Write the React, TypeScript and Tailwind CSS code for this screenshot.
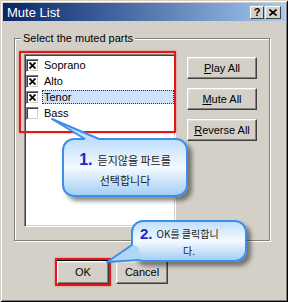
import type { ReactNode } from "react";

const Check = ({ checked }: { checked: boolean }) => (
  <span className="w-[13px] h-[13px] shrink-0 bg-white border border-t-[#808080] border-l-[#808080] border-b-white border-r-white shadow-[inset_1px_1px_0_#404040,inset_-1px_-1px_0_#d4d0c8] flex items-center justify-center">
    {checked && (
      <svg width="7" height="7" viewBox="0 0 7 7">
        <path d="M0.5 0.5 L6.5 6.5 M6.5 0.5 L0.5 6.5" stroke="#000" strokeWidth="1.8" />
      </svg>
    )}
  </span>
);

const Btn = ({ children, className = "" }: { children: ReactNode; className?: string }) => (
  <button
    className={`flex items-center justify-center bg-[#d4d0c8] border border-t-white border-l-white border-b-[#404040] border-r-[#404040] shadow-[inset_-1px_-1px_0_#808080,inset_1px_1px_0_#dfdfdf] text-[11px] leading-none text-black ${className}`}
  >
    {children}
  </button>
);

const parts = [
  { name: "Soprano", checked: true },
  { name: "Alto", checked: true },
  { name: "Tenor", checked: true, selected: true },
  { name: "Bass", checked: false },
];

export default function App() {
  return (
    <div className="w-[288px] h-[302px] relative bg-[#d4d0c8] p-[3px] flex flex-col font-['Liberation_Sans',Arial,sans-serif] text-black shadow-[inset_1px_1px_0_#d4d0c8,inset_-1px_-1px_0_#000,inset_2px_2px_0_#fff,inset_-2px_-2px_0_#808080]">
      {/* title bar */}
      <div className="h-[18px] flex items-center pl-[4px] pr-[4px] bg-linear-to-r from-[#0a246a] to-[#a6caf0]">
        <span className="text-white text-[13px] leading-none">Mute List</span>
        <div className="ml-auto flex gap-[1px]">
          <span className="w-[14px] h-[13px] flex items-center justify-center bg-[#d4d0c8] border border-t-white border-l-white border-b-[#404040] border-r-[#404040] text-[11px] font-bold leading-none">
            ?
          </span>
          <span className="w-[16px] h-[13px] flex items-center justify-center bg-[#d4d0c8] border border-t-white border-l-white border-b-[#404040] border-r-[#404040]">
            <svg width="8" height="7" viewBox="0 0 8 7">
              <path d="M0.5 0.5 L7.5 6.5 M7.5 0.5 L0.5 6.5" stroke="#000" strokeWidth="1.6" />
            </svg>
          </span>
        </div>
      </div>

      <div className="flex-1 flex flex-col pl-[11px]">
        {/* group box */}
        <div className="mt-[17px] w-[256px] h-[203px] border border-[#808080] shadow-[inset_1px_1px_0_#fff,1px_1px_0_#fff] px-[9px]">
          <div className="-mt-[7px] -ml-[3px] w-fit px-[2px] bg-[#d4d0c8] text-[11px] leading-[13px]">
            Select the muted parts
          </div>
          <div className="flex mt-[9px]">
            <div className="w-[152px] h-[173px] bg-white border border-t-[#808080] border-l-[#808080] border-b-white border-r-white shadow-[inset_1px_1px_0_#404040,inset_-1px_-1px_0_#d4d0c8] pt-[2px] pl-[1px] pr-[1px]">
              {parts.map((p) => (
                <div key={p.name} className="h-[16px] flex items-center">
                  <Check checked={p.checked} />
                  <span
                    className={`ml-[3px] flex-1 h-[14px] px-[1px] text-[11px] leading-[12px] flex items-center ${
                      p.selected ? "bg-[#cde2f8] border border-dotted border-[#333]" : "border border-transparent"
                    }`}
                  >
                    {p.name}
                  </span>
                </div>
              ))}
            </div>
            <div className="ml-[11px] mt-[3px] flex flex-col gap-[9px]">
              <Btn className="w-[70px] h-[22px]">
                <span className="underline underline-offset-[1px]">P</span>lay All
              </Btn>
              <Btn className="w-[70px] h-[22px]">
                <span className="underline underline-offset-[1px]">M</span>ute All
              </Btn>
              <Btn className="w-[70px] h-[22px]">
                <span className="underline underline-offset-[1px]">R</span>everse All
              </Btn>
            </div>
          </div>
        </div>

        {/* OK / Cancel */}
        <div className="flex gap-[7px] mt-[20px] ml-[43px]">
          <Btn className="w-[52px] h-[23px] outline outline-1 outline-black">OK</Btn>
          <Btn className="w-[52px] h-[23px]">Cancel</Btn>
        </div>
      </div>

      {/* red highlight boxes */}
      <div className="absolute left-[19px] top-[51px] w-[157px] h-[82px] border-2 border-[#e01818] shadow-[0_0_2px_rgba(255,60,60,0.6)]" />
      <div className="absolute left-[55px] top-[258px] w-[56px] h-[28px] border-2 border-[#e01818] shadow-[0_0_2px_rgba(255,60,60,0.6)]" />

      {/* callout 1 */}
      <div className="absolute left-[62px] top-[138px] w-[126px] h-[59px] rounded-[12px] border-2 border-[#3d8ee8] bg-linear-to-b from-[#c0dffb] via-[#f4faff] to-[#a4cff5] shadow-[4px_4px_4px_rgba(0,0,0,0.45)] flex flex-col items-center pt-[11px]">
        <div className="flex items-center h-[18px]">
          <span className="text-[16px] leading-none font-bold text-[#2323c8]">1.</span>
          <span className="ml-[5px] text-[11px] leading-none text-[#222] font-['Noto_Sans_CJK_KR',sans-serif]">
            듣지않을 파트를
          </span>
        </div>
        <div className="mt-[4px] h-[14px] flex items-center text-[11px] leading-none text-[#222] font-['Noto_Sans_CJK_KR',sans-serif]">
          선택합니다
        </div>
      </div>

      {/* callout 2 */}
      <div className="absolute left-[131px] top-[220px] w-[116px] h-[42px] rounded-[12px] border-2 border-[#3d8ee8] bg-linear-to-b from-[#c0dffb] via-[#f4faff] to-[#a4cff5] shadow-[4px_4px_4px_rgba(0,0,0,0.45)] flex flex-col pt-[3px]">
        <div className="flex items-center h-[17px] pl-[7px]">
          <span className="text-[15px] leading-none font-bold text-[#2323c8]">2.</span>
          <span className="ml-[4px] text-[10px] leading-none text-[#222] font-['Noto_Sans_CJK_KR',sans-serif]">
            OK를 클릭합니
          </span>
        </div>
        <div className="mt-[2px] h-[13px] flex items-center justify-center text-[10px] leading-none text-[#222] font-['Noto_Sans_CJK_KR',sans-serif]">
          다.
        </div>
      </div>

      {/* callout tails */}
      <svg className="absolute left-0 top-0 pointer-events-none" width="288" height="302" viewBox="0 0 288 302">
        <polygon points="52,119 85,139 85,142 99,142 99,139" fill="#c2e0fb" />
        <polyline points="85,139 52,119 99,139" fill="none" stroke="#3d8ee8" strokeWidth="2" strokeLinejoin="round" />
        <polygon points="107,262 132,245 137,246 142,256 139,260" fill="#b0d6f7" />
        <polyline points="132,245 107,262 139,260" fill="none" stroke="#3d8ee8" strokeWidth="2" strokeLinejoin="round" />
      </svg>
    </div>
  );
}
